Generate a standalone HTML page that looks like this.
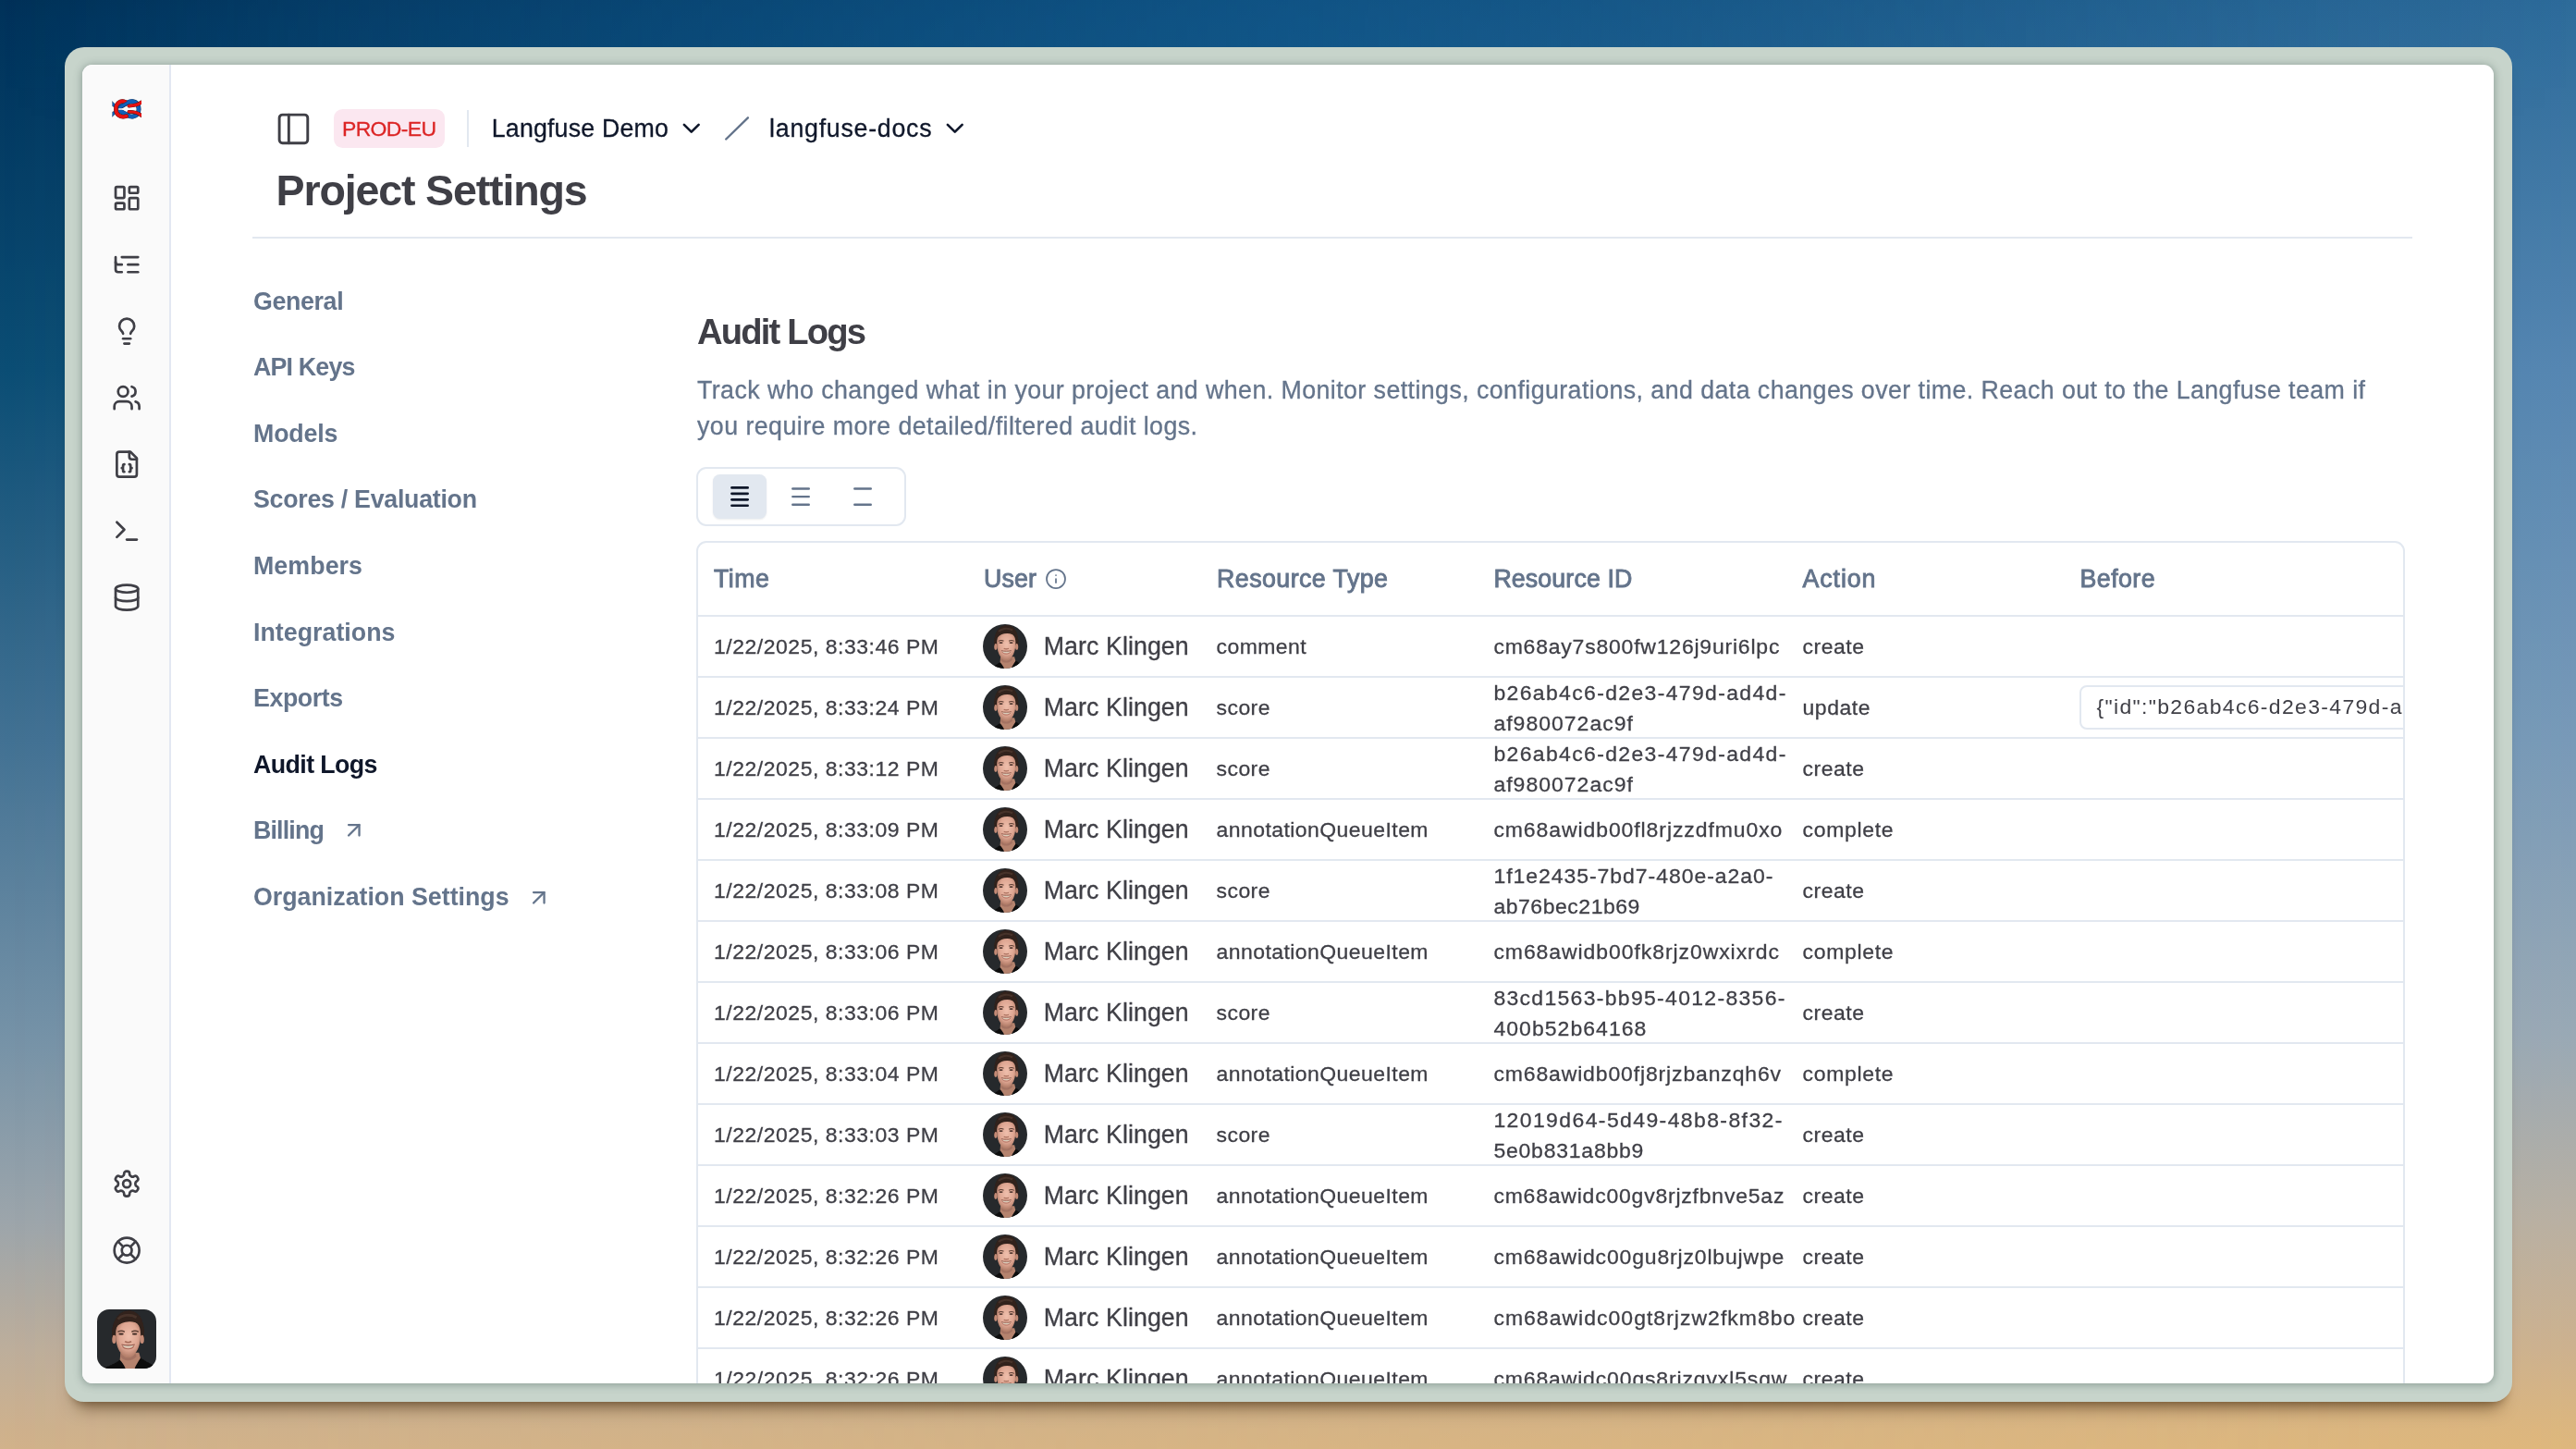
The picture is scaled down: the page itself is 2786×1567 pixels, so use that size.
<!DOCTYPE html>
<html lang="en"><head><meta charset="utf-8"><title>Project Settings - Audit Logs</title>
<style>
*{box-sizing:border-box;margin:0;padding:0}
html,body{width:2786px;height:1567px;overflow:hidden}
body{position:relative;font-family:"Liberation Sans",sans-serif;
 background:linear-gradient(180deg,rgb(0,49,88) 0%,rgb(0,51,91) 1.3%,rgb(11,77,116) 25.5%,rgb(66,113,147) 51%,rgb(117,146,167) 71.5%,rgb(156,165,171) 84.2%,rgb(189,174,155) 93.2%,rgb(206,177,141) 98.7%,rgb(209,178,139) 100%);}
body::before{content:"";position:absolute;left:0;top:0;width:2786px;height:1567px;
 background:linear-gradient(180deg,rgb(45,107,154) 0%,rgb(47,109,156) 1.3%,rgb(86,135,178) 25.5%,rgb(120,154,184) 51%,rgb(154,169,181) 71.5%,rgb(185,176,162) 84.2%,rgb(205,177,142) 93.2%,rgb(220,182,126) 98.7%,rgb(222,183,124) 100%);
 -webkit-mask-image:linear-gradient(90deg,rgba(0,0,0,0) 0%,rgba(0,0,0,1) 100%);mask-image:linear-gradient(90deg,rgba(0,0,0,0) 0%,rgba(0,0,0,1) 100%);}
body::after{content:"";position:absolute;left:0;top:0;width:2786px;height:140px;
 background:linear-gradient(90deg,rgba(0,96,160,0) 0%,rgba(0,96,160,.2) 25%,rgba(0,96,160,.3) 50%,rgba(0,96,160,.12) 75%,rgba(0,96,160,0) 100%);
 -webkit-mask-image:linear-gradient(180deg,#000 35%,rgba(0,0,0,0) 100%);mask-image:linear-gradient(180deg,#000 35%,rgba(0,0,0,0) 100%);}
.frame{position:absolute;z-index:1;left:70px;top:50.500px;width:2647px;height:1465.500px;border-radius:21px;background:#c7d4cb;
 box-shadow:0 19px 18px -13px rgba(70,40,10,.55),0 8px 9px -7px rgba(60,35,10,.35);}
.win{position:absolute;z-index:2;left:89px;top:70px;width:2608px;height:1425.500px;border-radius:11px;background:#fff;overflow:hidden;
 box-shadow:0 1px 8px 1px rgba(70,90,85,.42);}
.abs{position:absolute}
.page{position:absolute;left:-89px;top:-70px;width:2786px;height:1567px;will-change:transform}
.side{position:absolute;left:89px;top:70px;width:94px;height:1427px;background:#fafafa}
.sideb{position:absolute;left:183px;top:70px;width:2px;height:1427px;background:#e3e8f2}
.t{position:absolute;white-space:pre;line-height:1em;display:block}
.ic{position:absolute;display:block;overflow:hidden}
.hl{position:absolute;left:755px;width:1844px;height:2px;background:#e2e8f0}
</style></head>
<body>
<div class="frame"></div>
<div class="win"><div class="page">
<div class="side"></div><div class="sideb"></div>
<svg class="ic" style="left:120.700px;top:107.200px" viewBox="23 29 131 88" width="32.600" height="21.900" stroke-linecap="round" stroke-linejoin="round"><path d="M25 40 L37 52 L33.500 65 L25.500 60Z" fill="#1060b8" stroke="#1a2238" stroke-width="1.600"/><path d="M25 106 L37 94 L33.500 81 L25.500 86Z" fill="#1060b8" stroke="#1a2238" stroke-width="1.600"/><path d="M56 65 L92 44.500 C104 37 125 38 134 52 C142 66 141 84 133 95 C124 107 105 109 93 100.500 L57 81" stroke="#142a4a" stroke-width="20.1" fill="none"/><path d="M56 65 L92 44.500 C104 37 125 38 134 52 C142 66 141 84 133 95 C124 107 105 109 93 100.500 L57 81" stroke="#1060b8" stroke-width="17.5" fill="none"/><path d="M82 42.500 C58 32 40.500 50 40.500 73 C40.500 96 58 112.500 86 104" stroke="#3a1216" stroke-width="18.1" fill="none"/><path d="M82 42.500 C58 32 40.500 50 40.500 73 C40.500 96 58 112.500 86 104" stroke="#e61212" stroke-width="15.5" fill="none"/><path d="M58 65.500 L94 44.500" stroke="#142a4a" stroke-width="15.1" fill="none"/><path d="M58 65.500 L94 44.500" stroke="#1060b8" stroke-width="12.5" fill="none"/><path d="M94 44.500 C100 40 108 38.500 116 39.500" stroke="#1060b8" stroke-width="14" fill="none"/><path d="M151 43 C141 52.500 121 58 97 59.500" stroke="#3a1216" stroke-width="15.1" fill="none"/><path d="M151 43 C141 52.500 121 58 97 59.500" stroke="#e61212" stroke-width="12.5" fill="none"/><path d="M151 101 C141 90.500 121 85.500 97 84.500" stroke="#3a1216" stroke-width="15.1" fill="none"/><path d="M151 101 C141 90.500 121 85.500 97 84.500" stroke="#e61212" stroke-width="12.5" fill="none"/><path d="M54 73.200 L122 73.200" stroke="#fafafa" stroke-width="5.500" fill="none"/></svg>
<div class="abs" style="left:361px;top:118px;width:120px;height:42px;border-radius:9.500px;background:#fbe7f0"></div>
<div class="abs" style="left:505px;top:119px;width:2px;height:39.500px;background:#e2e8f0"></div>
<svg class="ic" style="left:780px;top:122px" width="34" height="34" viewBox="0 0 34 34"><path d="M5.200 28.500 L28.900 5.300" stroke="#64748b" stroke-width="2.400" stroke-linecap="round" fill="none"/></svg>
<div class="abs" style="left:273px;top:256px;width:2336px;height:2px;background:#e2e8f0"></div>
<div class="abs" style="left:753px;top:505px;width:227px;height:64px;border:2px solid #e2e8f0;border-radius:11px"></div>
<div class="abs" style="left:771px;top:513px;width:58px;height:48px;border-radius:7.500px;background:#e2e8f0;box-shadow:0 1px 2px rgba(15,23,42,.08)"></div>
<svg class="ic" style="left:780px;top:515px" width="180" height="44" viewBox="0 0 180 44" fill="none" stroke-linecap="round"><path d="M11.45 12.40 H28.65" stroke="#0f172a" stroke-width="2.7"/><path d="M11.45 18.85 H28.65" stroke="#0f172a" stroke-width="2.7"/><path d="M11.45 25.30 H28.65" stroke="#0f172a" stroke-width="2.7"/><path d="M11.45 31.75 H28.65" stroke="#0f172a" stroke-width="2.7"/><path d="M77.30 13.50 H94.80" stroke="#64748b" stroke-width="2.4"/><path d="M77.30 22.10 H94.80" stroke="#64748b" stroke-width="2.4"/><path d="M77.30 30.70 H94.80" stroke="#64748b" stroke-width="2.4"/><path d="M144.30 13.50 H161.80" stroke="#64748b" stroke-width="2.4"/><path d="M144.30 30.70 H161.80" stroke="#64748b" stroke-width="2.4"/></svg>
<div class="abs" style="left:753px;top:585px;width:1848px;height:940px;border:2px solid #e2e8f0;border-radius:11px"></div>
<div class="hl" style="top:665px"></div>
<div class="hl" style="top:731px"></div>
<div class="hl" style="top:797px"></div>
<div class="hl" style="top:863px"></div>
<div class="hl" style="top:929px"></div>
<div class="hl" style="top:995px"></div>
<div class="hl" style="top:1061px"></div>
<div class="hl" style="top:1127px"></div>
<div class="hl" style="top:1193px"></div>
<div class="hl" style="top:1259px"></div>
<div class="hl" style="top:1325px"></div>
<div class="hl" style="top:1391px"></div>
<div class="hl" style="top:1457px"></div>
<div class="abs" style="left:2249px;top:741px;width:350px;height:48px;overflow:hidden"><div class="abs" style="left:0;top:0;width:700px;height:48px;border:2px solid #e2e8f0;border-radius:8px"></div><span class="t" id="json" style="left:18.500px;top:12.0px;font-size:22.97px;color:#3f3f46;letter-spacing:1.338px">{&quot;id&quot;:&quot;b26ab4c6-d2e3-479d-ad4d-af980072ac9f&quot;,&quot;timestamp&quot;:&quot;2025-01-22T20:33:12.000Z&quot;</span></div>
<svg class="ic" style="left:1062.9px;top:674.8px;border-radius:50%" width="48.2" height="48.2" viewBox="0 0 48 48"><defs><radialGradient id="fg0" cx="52%" cy="42%" r="62%"><stop offset="0" stop-color="#efbfac"/><stop offset="0.6" stop-color="#dea692"/><stop offset="1" stop-color="#a8735f"/></radialGradient><filter id="fb0" x="-20%" y="-20%" width="140%" height="140%"><feGaussianBlur stdDeviation="0.5"/></filter></defs><rect width="48" height="48" fill="#26292c"/><g filter="url(#fb0)"><path d="M0 48 L8 46.500 C13 44.500 16 42.800 18.500 41 L35 39.200 C38 41 42 43.500 46.500 45.800 L48 48 Z" fill="#0d0d0e"/><path d="M19 35 L34 35 L35.200 39.500 C33 43 31 46 30.500 48 L23 48 C22 45 20 42.500 18.500 41 Z" fill="#b5836e"/><path d="M19.500 35.500 C22 40.500 28.500 40.500 31 35.500 L32 38 C28.500 42.500 22 42.500 19 38.500 Z" fill="#96655a" opacity="0.55"/><path d="M12.200 24.500 C11.300 10 17 1.200 25.500 1.200 C34 1.200 39.200 9 38 24.500 Z" fill="#30221c"/><ellipse cx="13.800" cy="24.300" rx="1.600" ry="3.400" fill="#c58b76"/><ellipse cx="36.500" cy="24.300" rx="1.600" ry="3.400" fill="#c58b76"/><path d="M15.100 20 C15 12 19 9.400 25.200 9.400 C31.500 9.400 35.400 12 35.300 20 C35.300 27 33.800 32 31 35.500 C29 38 27 38.900 25.200 38.900 C23.400 38.900 21.400 38 19.400 35.500 C16.600 32 15.100 27 15.100 20 Z" fill="url(#fg0)"/><path d="M12.200 23.500 C11.500 10 17 1.200 25.500 1.200 C34 1.200 39 9 38 23.500 C37.600 19 36.600 15 35 12.500 C33 10.600 30 9.800 26 9.900 C21.500 10 18.500 11.500 16.500 13.400 C14.600 15.500 13 19 12.200 23.500 Z" fill="#30221c"/><path d="M17 8 C20 4.500 27 3.500 32 6.500" stroke="#46332a" stroke-width="2.200" fill="none"/><path d="M16.800 18.300 C18.400 17.300 20.800 17.300 22.400 18.200 M28 18.200 C29.600 17.300 32 17.300 33.600 18.300" stroke="#5b3d32" stroke-width="1.100" fill="none"/><ellipse cx="19.500" cy="20" rx="2.100" ry="0.850" fill="#4a322b"/><ellipse cx="30.500" cy="20" rx="2.100" ry="0.850" fill="#4a322b"/><path d="M22.600 26 C23.800 27 26.600 27 27.800 26" stroke="#a56b59" stroke-width="1.100" fill="none"/><path d="M20.300 28.800 C22.800 29.500 27.600 29.500 30.100 28.800 C28.600 32 21.800 32 20.300 28.800 Z" fill="#d9cdbb"/><path d="M19.800 28.500 C22.800 29.300 27.600 29.300 30.600 28.500" stroke="#8f5648" stroke-width="0.900" fill="none"/><path d="M20.500 29.600 C22 32.800 28.400 32.800 29.900 29.600" stroke="#a8685a" stroke-width="0.800" fill="none"/></g></svg>
<svg class="ic" style="left:1062.9px;top:740.8px;border-radius:50%" width="48.2" height="48.2" viewBox="0 0 48 48"><defs><radialGradient id="fg1" cx="52%" cy="42%" r="62%"><stop offset="0" stop-color="#efbfac"/><stop offset="0.6" stop-color="#dea692"/><stop offset="1" stop-color="#a8735f"/></radialGradient><filter id="fb1" x="-20%" y="-20%" width="140%" height="140%"><feGaussianBlur stdDeviation="0.5"/></filter></defs><rect width="48" height="48" fill="#26292c"/><g filter="url(#fb1)"><path d="M0 48 L8 46.500 C13 44.500 16 42.800 18.500 41 L35 39.200 C38 41 42 43.500 46.500 45.800 L48 48 Z" fill="#0d0d0e"/><path d="M19 35 L34 35 L35.200 39.500 C33 43 31 46 30.500 48 L23 48 C22 45 20 42.500 18.500 41 Z" fill="#b5836e"/><path d="M19.500 35.500 C22 40.500 28.500 40.500 31 35.500 L32 38 C28.500 42.500 22 42.500 19 38.500 Z" fill="#96655a" opacity="0.55"/><path d="M12.200 24.500 C11.300 10 17 1.200 25.500 1.200 C34 1.200 39.200 9 38 24.500 Z" fill="#30221c"/><ellipse cx="13.800" cy="24.300" rx="1.600" ry="3.400" fill="#c58b76"/><ellipse cx="36.500" cy="24.300" rx="1.600" ry="3.400" fill="#c58b76"/><path d="M15.100 20 C15 12 19 9.400 25.200 9.400 C31.500 9.400 35.400 12 35.300 20 C35.300 27 33.800 32 31 35.500 C29 38 27 38.900 25.200 38.900 C23.400 38.900 21.400 38 19.400 35.500 C16.600 32 15.100 27 15.100 20 Z" fill="url(#fg1)"/><path d="M12.200 23.500 C11.500 10 17 1.200 25.500 1.200 C34 1.200 39 9 38 23.500 C37.600 19 36.600 15 35 12.500 C33 10.600 30 9.800 26 9.900 C21.500 10 18.500 11.500 16.500 13.400 C14.600 15.500 13 19 12.200 23.500 Z" fill="#30221c"/><path d="M17 8 C20 4.500 27 3.500 32 6.500" stroke="#46332a" stroke-width="2.200" fill="none"/><path d="M16.800 18.300 C18.400 17.300 20.800 17.300 22.400 18.200 M28 18.200 C29.600 17.300 32 17.300 33.600 18.300" stroke="#5b3d32" stroke-width="1.100" fill="none"/><ellipse cx="19.500" cy="20" rx="2.100" ry="0.850" fill="#4a322b"/><ellipse cx="30.500" cy="20" rx="2.100" ry="0.850" fill="#4a322b"/><path d="M22.600 26 C23.800 27 26.600 27 27.800 26" stroke="#a56b59" stroke-width="1.100" fill="none"/><path d="M20.300 28.800 C22.800 29.500 27.600 29.500 30.100 28.800 C28.600 32 21.800 32 20.300 28.800 Z" fill="#d9cdbb"/><path d="M19.800 28.500 C22.800 29.300 27.600 29.300 30.600 28.500" stroke="#8f5648" stroke-width="0.900" fill="none"/><path d="M20.500 29.600 C22 32.800 28.400 32.800 29.900 29.600" stroke="#a8685a" stroke-width="0.800" fill="none"/></g></svg>
<svg class="ic" style="left:1062.9px;top:806.8px;border-radius:50%" width="48.2" height="48.2" viewBox="0 0 48 48"><defs><radialGradient id="fg2" cx="52%" cy="42%" r="62%"><stop offset="0" stop-color="#efbfac"/><stop offset="0.6" stop-color="#dea692"/><stop offset="1" stop-color="#a8735f"/></radialGradient><filter id="fb2" x="-20%" y="-20%" width="140%" height="140%"><feGaussianBlur stdDeviation="0.5"/></filter></defs><rect width="48" height="48" fill="#26292c"/><g filter="url(#fb2)"><path d="M0 48 L8 46.500 C13 44.500 16 42.800 18.500 41 L35 39.200 C38 41 42 43.500 46.500 45.800 L48 48 Z" fill="#0d0d0e"/><path d="M19 35 L34 35 L35.200 39.500 C33 43 31 46 30.500 48 L23 48 C22 45 20 42.500 18.500 41 Z" fill="#b5836e"/><path d="M19.500 35.500 C22 40.500 28.500 40.500 31 35.500 L32 38 C28.500 42.500 22 42.500 19 38.500 Z" fill="#96655a" opacity="0.55"/><path d="M12.200 24.500 C11.300 10 17 1.200 25.500 1.200 C34 1.200 39.200 9 38 24.500 Z" fill="#30221c"/><ellipse cx="13.800" cy="24.300" rx="1.600" ry="3.400" fill="#c58b76"/><ellipse cx="36.500" cy="24.300" rx="1.600" ry="3.400" fill="#c58b76"/><path d="M15.100 20 C15 12 19 9.400 25.200 9.400 C31.500 9.400 35.400 12 35.300 20 C35.300 27 33.800 32 31 35.500 C29 38 27 38.900 25.200 38.900 C23.400 38.900 21.400 38 19.400 35.500 C16.600 32 15.100 27 15.100 20 Z" fill="url(#fg2)"/><path d="M12.200 23.500 C11.500 10 17 1.200 25.500 1.200 C34 1.200 39 9 38 23.500 C37.600 19 36.600 15 35 12.500 C33 10.600 30 9.800 26 9.900 C21.500 10 18.500 11.500 16.500 13.400 C14.600 15.500 13 19 12.200 23.500 Z" fill="#30221c"/><path d="M17 8 C20 4.500 27 3.500 32 6.500" stroke="#46332a" stroke-width="2.200" fill="none"/><path d="M16.800 18.300 C18.400 17.300 20.800 17.300 22.400 18.200 M28 18.200 C29.600 17.300 32 17.300 33.600 18.300" stroke="#5b3d32" stroke-width="1.100" fill="none"/><ellipse cx="19.500" cy="20" rx="2.100" ry="0.850" fill="#4a322b"/><ellipse cx="30.500" cy="20" rx="2.100" ry="0.850" fill="#4a322b"/><path d="M22.600 26 C23.800 27 26.600 27 27.800 26" stroke="#a56b59" stroke-width="1.100" fill="none"/><path d="M20.300 28.800 C22.800 29.500 27.600 29.500 30.100 28.800 C28.600 32 21.800 32 20.300 28.800 Z" fill="#d9cdbb"/><path d="M19.800 28.500 C22.800 29.300 27.600 29.300 30.600 28.500" stroke="#8f5648" stroke-width="0.900" fill="none"/><path d="M20.500 29.600 C22 32.800 28.400 32.800 29.900 29.600" stroke="#a8685a" stroke-width="0.800" fill="none"/></g></svg>
<svg class="ic" style="left:1062.9px;top:872.8px;border-radius:50%" width="48.2" height="48.2" viewBox="0 0 48 48"><defs><radialGradient id="fg3" cx="52%" cy="42%" r="62%"><stop offset="0" stop-color="#efbfac"/><stop offset="0.6" stop-color="#dea692"/><stop offset="1" stop-color="#a8735f"/></radialGradient><filter id="fb3" x="-20%" y="-20%" width="140%" height="140%"><feGaussianBlur stdDeviation="0.5"/></filter></defs><rect width="48" height="48" fill="#26292c"/><g filter="url(#fb3)"><path d="M0 48 L8 46.500 C13 44.500 16 42.800 18.500 41 L35 39.200 C38 41 42 43.500 46.500 45.800 L48 48 Z" fill="#0d0d0e"/><path d="M19 35 L34 35 L35.200 39.500 C33 43 31 46 30.500 48 L23 48 C22 45 20 42.500 18.500 41 Z" fill="#b5836e"/><path d="M19.500 35.500 C22 40.500 28.500 40.500 31 35.500 L32 38 C28.500 42.500 22 42.500 19 38.500 Z" fill="#96655a" opacity="0.55"/><path d="M12.200 24.500 C11.300 10 17 1.200 25.500 1.200 C34 1.200 39.200 9 38 24.500 Z" fill="#30221c"/><ellipse cx="13.800" cy="24.300" rx="1.600" ry="3.400" fill="#c58b76"/><ellipse cx="36.500" cy="24.300" rx="1.600" ry="3.400" fill="#c58b76"/><path d="M15.100 20 C15 12 19 9.400 25.200 9.400 C31.500 9.400 35.400 12 35.300 20 C35.300 27 33.800 32 31 35.500 C29 38 27 38.900 25.200 38.900 C23.400 38.900 21.400 38 19.400 35.500 C16.600 32 15.100 27 15.100 20 Z" fill="url(#fg3)"/><path d="M12.200 23.500 C11.500 10 17 1.200 25.500 1.200 C34 1.200 39 9 38 23.500 C37.600 19 36.600 15 35 12.500 C33 10.600 30 9.800 26 9.900 C21.500 10 18.500 11.500 16.500 13.400 C14.600 15.500 13 19 12.200 23.500 Z" fill="#30221c"/><path d="M17 8 C20 4.500 27 3.500 32 6.500" stroke="#46332a" stroke-width="2.200" fill="none"/><path d="M16.800 18.300 C18.400 17.300 20.800 17.300 22.400 18.200 M28 18.200 C29.600 17.300 32 17.300 33.600 18.300" stroke="#5b3d32" stroke-width="1.100" fill="none"/><ellipse cx="19.500" cy="20" rx="2.100" ry="0.850" fill="#4a322b"/><ellipse cx="30.500" cy="20" rx="2.100" ry="0.850" fill="#4a322b"/><path d="M22.600 26 C23.800 27 26.600 27 27.800 26" stroke="#a56b59" stroke-width="1.100" fill="none"/><path d="M20.300 28.800 C22.800 29.500 27.600 29.500 30.100 28.800 C28.600 32 21.800 32 20.300 28.800 Z" fill="#d9cdbb"/><path d="M19.800 28.500 C22.800 29.300 27.600 29.300 30.600 28.500" stroke="#8f5648" stroke-width="0.900" fill="none"/><path d="M20.500 29.600 C22 32.800 28.400 32.800 29.900 29.600" stroke="#a8685a" stroke-width="0.800" fill="none"/></g></svg>
<svg class="ic" style="left:1062.9px;top:938.8px;border-radius:50%" width="48.2" height="48.2" viewBox="0 0 48 48"><defs><radialGradient id="fg4" cx="52%" cy="42%" r="62%"><stop offset="0" stop-color="#efbfac"/><stop offset="0.6" stop-color="#dea692"/><stop offset="1" stop-color="#a8735f"/></radialGradient><filter id="fb4" x="-20%" y="-20%" width="140%" height="140%"><feGaussianBlur stdDeviation="0.5"/></filter></defs><rect width="48" height="48" fill="#26292c"/><g filter="url(#fb4)"><path d="M0 48 L8 46.500 C13 44.500 16 42.800 18.500 41 L35 39.200 C38 41 42 43.500 46.500 45.800 L48 48 Z" fill="#0d0d0e"/><path d="M19 35 L34 35 L35.200 39.500 C33 43 31 46 30.500 48 L23 48 C22 45 20 42.500 18.500 41 Z" fill="#b5836e"/><path d="M19.500 35.500 C22 40.500 28.500 40.500 31 35.500 L32 38 C28.500 42.500 22 42.500 19 38.500 Z" fill="#96655a" opacity="0.55"/><path d="M12.200 24.500 C11.300 10 17 1.200 25.500 1.200 C34 1.200 39.200 9 38 24.500 Z" fill="#30221c"/><ellipse cx="13.800" cy="24.300" rx="1.600" ry="3.400" fill="#c58b76"/><ellipse cx="36.500" cy="24.300" rx="1.600" ry="3.400" fill="#c58b76"/><path d="M15.100 20 C15 12 19 9.400 25.200 9.400 C31.500 9.400 35.400 12 35.300 20 C35.300 27 33.800 32 31 35.500 C29 38 27 38.900 25.200 38.900 C23.400 38.900 21.400 38 19.400 35.500 C16.600 32 15.100 27 15.100 20 Z" fill="url(#fg4)"/><path d="M12.200 23.500 C11.500 10 17 1.200 25.500 1.200 C34 1.200 39 9 38 23.500 C37.600 19 36.600 15 35 12.500 C33 10.600 30 9.800 26 9.900 C21.500 10 18.500 11.500 16.500 13.400 C14.600 15.500 13 19 12.200 23.500 Z" fill="#30221c"/><path d="M17 8 C20 4.500 27 3.500 32 6.500" stroke="#46332a" stroke-width="2.200" fill="none"/><path d="M16.800 18.300 C18.400 17.300 20.800 17.300 22.400 18.200 M28 18.200 C29.600 17.300 32 17.300 33.600 18.300" stroke="#5b3d32" stroke-width="1.100" fill="none"/><ellipse cx="19.500" cy="20" rx="2.100" ry="0.850" fill="#4a322b"/><ellipse cx="30.500" cy="20" rx="2.100" ry="0.850" fill="#4a322b"/><path d="M22.600 26 C23.800 27 26.600 27 27.800 26" stroke="#a56b59" stroke-width="1.100" fill="none"/><path d="M20.300 28.800 C22.800 29.500 27.600 29.500 30.100 28.800 C28.600 32 21.800 32 20.300 28.800 Z" fill="#d9cdbb"/><path d="M19.800 28.500 C22.800 29.300 27.600 29.300 30.600 28.500" stroke="#8f5648" stroke-width="0.900" fill="none"/><path d="M20.500 29.600 C22 32.800 28.400 32.800 29.900 29.600" stroke="#a8685a" stroke-width="0.800" fill="none"/></g></svg>
<svg class="ic" style="left:1062.9px;top:1004.8px;border-radius:50%" width="48.2" height="48.2" viewBox="0 0 48 48"><defs><radialGradient id="fg5" cx="52%" cy="42%" r="62%"><stop offset="0" stop-color="#efbfac"/><stop offset="0.6" stop-color="#dea692"/><stop offset="1" stop-color="#a8735f"/></radialGradient><filter id="fb5" x="-20%" y="-20%" width="140%" height="140%"><feGaussianBlur stdDeviation="0.5"/></filter></defs><rect width="48" height="48" fill="#26292c"/><g filter="url(#fb5)"><path d="M0 48 L8 46.500 C13 44.500 16 42.800 18.500 41 L35 39.200 C38 41 42 43.500 46.500 45.800 L48 48 Z" fill="#0d0d0e"/><path d="M19 35 L34 35 L35.200 39.500 C33 43 31 46 30.500 48 L23 48 C22 45 20 42.500 18.500 41 Z" fill="#b5836e"/><path d="M19.500 35.500 C22 40.500 28.500 40.500 31 35.500 L32 38 C28.500 42.500 22 42.500 19 38.500 Z" fill="#96655a" opacity="0.55"/><path d="M12.200 24.500 C11.300 10 17 1.200 25.500 1.200 C34 1.200 39.200 9 38 24.500 Z" fill="#30221c"/><ellipse cx="13.800" cy="24.300" rx="1.600" ry="3.400" fill="#c58b76"/><ellipse cx="36.500" cy="24.300" rx="1.600" ry="3.400" fill="#c58b76"/><path d="M15.100 20 C15 12 19 9.400 25.200 9.400 C31.500 9.400 35.400 12 35.300 20 C35.300 27 33.800 32 31 35.500 C29 38 27 38.900 25.200 38.900 C23.400 38.900 21.400 38 19.400 35.500 C16.600 32 15.100 27 15.100 20 Z" fill="url(#fg5)"/><path d="M12.200 23.500 C11.500 10 17 1.200 25.500 1.200 C34 1.200 39 9 38 23.500 C37.600 19 36.600 15 35 12.500 C33 10.600 30 9.800 26 9.900 C21.500 10 18.500 11.500 16.500 13.400 C14.600 15.500 13 19 12.200 23.500 Z" fill="#30221c"/><path d="M17 8 C20 4.500 27 3.500 32 6.500" stroke="#46332a" stroke-width="2.200" fill="none"/><path d="M16.800 18.300 C18.400 17.300 20.800 17.300 22.400 18.200 M28 18.200 C29.600 17.300 32 17.300 33.600 18.300" stroke="#5b3d32" stroke-width="1.100" fill="none"/><ellipse cx="19.500" cy="20" rx="2.100" ry="0.850" fill="#4a322b"/><ellipse cx="30.500" cy="20" rx="2.100" ry="0.850" fill="#4a322b"/><path d="M22.600 26 C23.800 27 26.600 27 27.800 26" stroke="#a56b59" stroke-width="1.100" fill="none"/><path d="M20.300 28.800 C22.800 29.500 27.600 29.500 30.100 28.800 C28.600 32 21.800 32 20.300 28.800 Z" fill="#d9cdbb"/><path d="M19.800 28.500 C22.800 29.300 27.600 29.300 30.600 28.500" stroke="#8f5648" stroke-width="0.900" fill="none"/><path d="M20.500 29.600 C22 32.800 28.400 32.800 29.900 29.600" stroke="#a8685a" stroke-width="0.800" fill="none"/></g></svg>
<svg class="ic" style="left:1062.9px;top:1070.8px;border-radius:50%" width="48.2" height="48.2" viewBox="0 0 48 48"><defs><radialGradient id="fg6" cx="52%" cy="42%" r="62%"><stop offset="0" stop-color="#efbfac"/><stop offset="0.6" stop-color="#dea692"/><stop offset="1" stop-color="#a8735f"/></radialGradient><filter id="fb6" x="-20%" y="-20%" width="140%" height="140%"><feGaussianBlur stdDeviation="0.5"/></filter></defs><rect width="48" height="48" fill="#26292c"/><g filter="url(#fb6)"><path d="M0 48 L8 46.500 C13 44.500 16 42.800 18.500 41 L35 39.200 C38 41 42 43.500 46.500 45.800 L48 48 Z" fill="#0d0d0e"/><path d="M19 35 L34 35 L35.200 39.500 C33 43 31 46 30.500 48 L23 48 C22 45 20 42.500 18.500 41 Z" fill="#b5836e"/><path d="M19.500 35.500 C22 40.500 28.500 40.500 31 35.500 L32 38 C28.500 42.500 22 42.500 19 38.500 Z" fill="#96655a" opacity="0.55"/><path d="M12.200 24.500 C11.300 10 17 1.200 25.500 1.200 C34 1.200 39.200 9 38 24.500 Z" fill="#30221c"/><ellipse cx="13.800" cy="24.300" rx="1.600" ry="3.400" fill="#c58b76"/><ellipse cx="36.500" cy="24.300" rx="1.600" ry="3.400" fill="#c58b76"/><path d="M15.100 20 C15 12 19 9.400 25.200 9.400 C31.500 9.400 35.400 12 35.300 20 C35.300 27 33.800 32 31 35.500 C29 38 27 38.900 25.200 38.900 C23.400 38.900 21.400 38 19.400 35.500 C16.600 32 15.100 27 15.100 20 Z" fill="url(#fg6)"/><path d="M12.200 23.500 C11.500 10 17 1.200 25.500 1.200 C34 1.200 39 9 38 23.500 C37.600 19 36.600 15 35 12.500 C33 10.600 30 9.800 26 9.900 C21.500 10 18.500 11.500 16.500 13.400 C14.600 15.500 13 19 12.200 23.500 Z" fill="#30221c"/><path d="M17 8 C20 4.500 27 3.500 32 6.500" stroke="#46332a" stroke-width="2.200" fill="none"/><path d="M16.800 18.300 C18.400 17.300 20.800 17.300 22.400 18.200 M28 18.200 C29.600 17.300 32 17.300 33.600 18.300" stroke="#5b3d32" stroke-width="1.100" fill="none"/><ellipse cx="19.500" cy="20" rx="2.100" ry="0.850" fill="#4a322b"/><ellipse cx="30.500" cy="20" rx="2.100" ry="0.850" fill="#4a322b"/><path d="M22.600 26 C23.800 27 26.600 27 27.800 26" stroke="#a56b59" stroke-width="1.100" fill="none"/><path d="M20.300 28.800 C22.800 29.500 27.600 29.500 30.100 28.800 C28.600 32 21.800 32 20.300 28.800 Z" fill="#d9cdbb"/><path d="M19.800 28.500 C22.800 29.300 27.600 29.300 30.600 28.500" stroke="#8f5648" stroke-width="0.900" fill="none"/><path d="M20.500 29.600 C22 32.800 28.400 32.800 29.900 29.600" stroke="#a8685a" stroke-width="0.800" fill="none"/></g></svg>
<svg class="ic" style="left:1062.9px;top:1136.8px;border-radius:50%" width="48.2" height="48.2" viewBox="0 0 48 48"><defs><radialGradient id="fg7" cx="52%" cy="42%" r="62%"><stop offset="0" stop-color="#efbfac"/><stop offset="0.6" stop-color="#dea692"/><stop offset="1" stop-color="#a8735f"/></radialGradient><filter id="fb7" x="-20%" y="-20%" width="140%" height="140%"><feGaussianBlur stdDeviation="0.5"/></filter></defs><rect width="48" height="48" fill="#26292c"/><g filter="url(#fb7)"><path d="M0 48 L8 46.500 C13 44.500 16 42.800 18.500 41 L35 39.200 C38 41 42 43.500 46.500 45.800 L48 48 Z" fill="#0d0d0e"/><path d="M19 35 L34 35 L35.200 39.500 C33 43 31 46 30.500 48 L23 48 C22 45 20 42.500 18.500 41 Z" fill="#b5836e"/><path d="M19.500 35.500 C22 40.500 28.500 40.500 31 35.500 L32 38 C28.500 42.500 22 42.500 19 38.500 Z" fill="#96655a" opacity="0.55"/><path d="M12.200 24.500 C11.300 10 17 1.200 25.500 1.200 C34 1.200 39.200 9 38 24.500 Z" fill="#30221c"/><ellipse cx="13.800" cy="24.300" rx="1.600" ry="3.400" fill="#c58b76"/><ellipse cx="36.500" cy="24.300" rx="1.600" ry="3.400" fill="#c58b76"/><path d="M15.100 20 C15 12 19 9.400 25.200 9.400 C31.500 9.400 35.400 12 35.300 20 C35.300 27 33.800 32 31 35.500 C29 38 27 38.900 25.200 38.900 C23.400 38.900 21.400 38 19.400 35.500 C16.600 32 15.100 27 15.100 20 Z" fill="url(#fg7)"/><path d="M12.200 23.500 C11.500 10 17 1.200 25.500 1.200 C34 1.200 39 9 38 23.500 C37.600 19 36.600 15 35 12.500 C33 10.600 30 9.800 26 9.900 C21.500 10 18.500 11.500 16.500 13.400 C14.600 15.500 13 19 12.200 23.500 Z" fill="#30221c"/><path d="M17 8 C20 4.500 27 3.500 32 6.500" stroke="#46332a" stroke-width="2.200" fill="none"/><path d="M16.800 18.300 C18.400 17.300 20.800 17.300 22.400 18.200 M28 18.200 C29.600 17.300 32 17.300 33.600 18.300" stroke="#5b3d32" stroke-width="1.100" fill="none"/><ellipse cx="19.500" cy="20" rx="2.100" ry="0.850" fill="#4a322b"/><ellipse cx="30.500" cy="20" rx="2.100" ry="0.850" fill="#4a322b"/><path d="M22.600 26 C23.800 27 26.600 27 27.800 26" stroke="#a56b59" stroke-width="1.100" fill="none"/><path d="M20.300 28.800 C22.800 29.500 27.600 29.500 30.100 28.800 C28.600 32 21.800 32 20.300 28.800 Z" fill="#d9cdbb"/><path d="M19.800 28.500 C22.800 29.300 27.600 29.300 30.600 28.500" stroke="#8f5648" stroke-width="0.900" fill="none"/><path d="M20.500 29.600 C22 32.800 28.400 32.800 29.900 29.600" stroke="#a8685a" stroke-width="0.800" fill="none"/></g></svg>
<svg class="ic" style="left:1062.9px;top:1202.8px;border-radius:50%" width="48.2" height="48.2" viewBox="0 0 48 48"><defs><radialGradient id="fg8" cx="52%" cy="42%" r="62%"><stop offset="0" stop-color="#efbfac"/><stop offset="0.6" stop-color="#dea692"/><stop offset="1" stop-color="#a8735f"/></radialGradient><filter id="fb8" x="-20%" y="-20%" width="140%" height="140%"><feGaussianBlur stdDeviation="0.5"/></filter></defs><rect width="48" height="48" fill="#26292c"/><g filter="url(#fb8)"><path d="M0 48 L8 46.500 C13 44.500 16 42.800 18.500 41 L35 39.200 C38 41 42 43.500 46.500 45.800 L48 48 Z" fill="#0d0d0e"/><path d="M19 35 L34 35 L35.200 39.500 C33 43 31 46 30.500 48 L23 48 C22 45 20 42.500 18.500 41 Z" fill="#b5836e"/><path d="M19.500 35.500 C22 40.500 28.500 40.500 31 35.500 L32 38 C28.500 42.500 22 42.500 19 38.500 Z" fill="#96655a" opacity="0.55"/><path d="M12.200 24.500 C11.300 10 17 1.200 25.500 1.200 C34 1.200 39.200 9 38 24.500 Z" fill="#30221c"/><ellipse cx="13.800" cy="24.300" rx="1.600" ry="3.400" fill="#c58b76"/><ellipse cx="36.500" cy="24.300" rx="1.600" ry="3.400" fill="#c58b76"/><path d="M15.100 20 C15 12 19 9.400 25.200 9.400 C31.500 9.400 35.400 12 35.300 20 C35.300 27 33.800 32 31 35.500 C29 38 27 38.900 25.200 38.900 C23.400 38.900 21.400 38 19.400 35.500 C16.600 32 15.100 27 15.100 20 Z" fill="url(#fg8)"/><path d="M12.200 23.500 C11.500 10 17 1.200 25.500 1.200 C34 1.200 39 9 38 23.500 C37.600 19 36.600 15 35 12.500 C33 10.600 30 9.800 26 9.900 C21.500 10 18.500 11.500 16.500 13.400 C14.600 15.500 13 19 12.200 23.500 Z" fill="#30221c"/><path d="M17 8 C20 4.500 27 3.500 32 6.500" stroke="#46332a" stroke-width="2.200" fill="none"/><path d="M16.800 18.300 C18.400 17.300 20.800 17.300 22.400 18.200 M28 18.200 C29.600 17.300 32 17.300 33.600 18.300" stroke="#5b3d32" stroke-width="1.100" fill="none"/><ellipse cx="19.500" cy="20" rx="2.100" ry="0.850" fill="#4a322b"/><ellipse cx="30.500" cy="20" rx="2.100" ry="0.850" fill="#4a322b"/><path d="M22.600 26 C23.800 27 26.600 27 27.800 26" stroke="#a56b59" stroke-width="1.100" fill="none"/><path d="M20.300 28.800 C22.800 29.500 27.600 29.500 30.100 28.800 C28.600 32 21.800 32 20.300 28.800 Z" fill="#d9cdbb"/><path d="M19.800 28.500 C22.800 29.300 27.600 29.300 30.600 28.500" stroke="#8f5648" stroke-width="0.900" fill="none"/><path d="M20.500 29.600 C22 32.800 28.400 32.800 29.900 29.600" stroke="#a8685a" stroke-width="0.800" fill="none"/></g></svg>
<svg class="ic" style="left:1062.9px;top:1268.8px;border-radius:50%" width="48.2" height="48.2" viewBox="0 0 48 48"><defs><radialGradient id="fg9" cx="52%" cy="42%" r="62%"><stop offset="0" stop-color="#efbfac"/><stop offset="0.6" stop-color="#dea692"/><stop offset="1" stop-color="#a8735f"/></radialGradient><filter id="fb9" x="-20%" y="-20%" width="140%" height="140%"><feGaussianBlur stdDeviation="0.5"/></filter></defs><rect width="48" height="48" fill="#26292c"/><g filter="url(#fb9)"><path d="M0 48 L8 46.500 C13 44.500 16 42.800 18.500 41 L35 39.200 C38 41 42 43.500 46.500 45.800 L48 48 Z" fill="#0d0d0e"/><path d="M19 35 L34 35 L35.200 39.500 C33 43 31 46 30.500 48 L23 48 C22 45 20 42.500 18.500 41 Z" fill="#b5836e"/><path d="M19.500 35.500 C22 40.500 28.500 40.500 31 35.500 L32 38 C28.500 42.500 22 42.500 19 38.500 Z" fill="#96655a" opacity="0.55"/><path d="M12.200 24.500 C11.300 10 17 1.200 25.500 1.200 C34 1.200 39.200 9 38 24.500 Z" fill="#30221c"/><ellipse cx="13.800" cy="24.300" rx="1.600" ry="3.400" fill="#c58b76"/><ellipse cx="36.500" cy="24.300" rx="1.600" ry="3.400" fill="#c58b76"/><path d="M15.100 20 C15 12 19 9.400 25.200 9.400 C31.500 9.400 35.400 12 35.300 20 C35.300 27 33.800 32 31 35.500 C29 38 27 38.900 25.200 38.900 C23.400 38.900 21.400 38 19.400 35.500 C16.600 32 15.100 27 15.100 20 Z" fill="url(#fg9)"/><path d="M12.200 23.500 C11.500 10 17 1.200 25.500 1.200 C34 1.200 39 9 38 23.500 C37.600 19 36.600 15 35 12.500 C33 10.600 30 9.800 26 9.900 C21.500 10 18.500 11.500 16.500 13.400 C14.600 15.500 13 19 12.200 23.500 Z" fill="#30221c"/><path d="M17 8 C20 4.500 27 3.500 32 6.500" stroke="#46332a" stroke-width="2.200" fill="none"/><path d="M16.800 18.300 C18.400 17.300 20.800 17.300 22.400 18.200 M28 18.200 C29.600 17.300 32 17.300 33.600 18.300" stroke="#5b3d32" stroke-width="1.100" fill="none"/><ellipse cx="19.500" cy="20" rx="2.100" ry="0.850" fill="#4a322b"/><ellipse cx="30.500" cy="20" rx="2.100" ry="0.850" fill="#4a322b"/><path d="M22.600 26 C23.800 27 26.600 27 27.800 26" stroke="#a56b59" stroke-width="1.100" fill="none"/><path d="M20.300 28.800 C22.800 29.500 27.600 29.500 30.100 28.800 C28.600 32 21.800 32 20.300 28.800 Z" fill="#d9cdbb"/><path d="M19.800 28.500 C22.800 29.300 27.600 29.300 30.600 28.500" stroke="#8f5648" stroke-width="0.900" fill="none"/><path d="M20.500 29.600 C22 32.800 28.400 32.800 29.900 29.600" stroke="#a8685a" stroke-width="0.800" fill="none"/></g></svg>
<svg class="ic" style="left:1062.9px;top:1334.8px;border-radius:50%" width="48.2" height="48.2" viewBox="0 0 48 48"><defs><radialGradient id="fg10" cx="52%" cy="42%" r="62%"><stop offset="0" stop-color="#efbfac"/><stop offset="0.6" stop-color="#dea692"/><stop offset="1" stop-color="#a8735f"/></radialGradient><filter id="fb10" x="-20%" y="-20%" width="140%" height="140%"><feGaussianBlur stdDeviation="0.5"/></filter></defs><rect width="48" height="48" fill="#26292c"/><g filter="url(#fb10)"><path d="M0 48 L8 46.500 C13 44.500 16 42.800 18.500 41 L35 39.200 C38 41 42 43.500 46.500 45.800 L48 48 Z" fill="#0d0d0e"/><path d="M19 35 L34 35 L35.200 39.500 C33 43 31 46 30.500 48 L23 48 C22 45 20 42.500 18.500 41 Z" fill="#b5836e"/><path d="M19.500 35.500 C22 40.500 28.500 40.500 31 35.500 L32 38 C28.500 42.500 22 42.500 19 38.500 Z" fill="#96655a" opacity="0.55"/><path d="M12.200 24.500 C11.300 10 17 1.200 25.500 1.200 C34 1.200 39.200 9 38 24.500 Z" fill="#30221c"/><ellipse cx="13.800" cy="24.300" rx="1.600" ry="3.400" fill="#c58b76"/><ellipse cx="36.500" cy="24.300" rx="1.600" ry="3.400" fill="#c58b76"/><path d="M15.100 20 C15 12 19 9.400 25.200 9.400 C31.500 9.400 35.400 12 35.300 20 C35.300 27 33.800 32 31 35.500 C29 38 27 38.900 25.200 38.900 C23.400 38.900 21.400 38 19.400 35.500 C16.600 32 15.100 27 15.100 20 Z" fill="url(#fg10)"/><path d="M12.200 23.500 C11.500 10 17 1.200 25.500 1.200 C34 1.200 39 9 38 23.500 C37.600 19 36.600 15 35 12.500 C33 10.600 30 9.800 26 9.900 C21.500 10 18.500 11.500 16.500 13.400 C14.600 15.500 13 19 12.200 23.500 Z" fill="#30221c"/><path d="M17 8 C20 4.500 27 3.500 32 6.500" stroke="#46332a" stroke-width="2.200" fill="none"/><path d="M16.800 18.300 C18.400 17.300 20.800 17.300 22.400 18.200 M28 18.200 C29.600 17.300 32 17.300 33.600 18.300" stroke="#5b3d32" stroke-width="1.100" fill="none"/><ellipse cx="19.500" cy="20" rx="2.100" ry="0.850" fill="#4a322b"/><ellipse cx="30.500" cy="20" rx="2.100" ry="0.850" fill="#4a322b"/><path d="M22.600 26 C23.800 27 26.600 27 27.800 26" stroke="#a56b59" stroke-width="1.100" fill="none"/><path d="M20.300 28.800 C22.800 29.500 27.600 29.500 30.100 28.800 C28.600 32 21.800 32 20.300 28.800 Z" fill="#d9cdbb"/><path d="M19.800 28.500 C22.800 29.300 27.600 29.300 30.600 28.500" stroke="#8f5648" stroke-width="0.900" fill="none"/><path d="M20.500 29.600 C22 32.800 28.400 32.800 29.900 29.600" stroke="#a8685a" stroke-width="0.800" fill="none"/></g></svg>
<svg class="ic" style="left:1062.9px;top:1400.8px;border-radius:50%" width="48.2" height="48.2" viewBox="0 0 48 48"><defs><radialGradient id="fg11" cx="52%" cy="42%" r="62%"><stop offset="0" stop-color="#efbfac"/><stop offset="0.6" stop-color="#dea692"/><stop offset="1" stop-color="#a8735f"/></radialGradient><filter id="fb11" x="-20%" y="-20%" width="140%" height="140%"><feGaussianBlur stdDeviation="0.5"/></filter></defs><rect width="48" height="48" fill="#26292c"/><g filter="url(#fb11)"><path d="M0 48 L8 46.500 C13 44.500 16 42.800 18.500 41 L35 39.200 C38 41 42 43.500 46.500 45.800 L48 48 Z" fill="#0d0d0e"/><path d="M19 35 L34 35 L35.200 39.500 C33 43 31 46 30.500 48 L23 48 C22 45 20 42.500 18.500 41 Z" fill="#b5836e"/><path d="M19.500 35.500 C22 40.500 28.500 40.500 31 35.500 L32 38 C28.500 42.500 22 42.500 19 38.500 Z" fill="#96655a" opacity="0.55"/><path d="M12.200 24.500 C11.300 10 17 1.200 25.500 1.200 C34 1.200 39.200 9 38 24.500 Z" fill="#30221c"/><ellipse cx="13.800" cy="24.300" rx="1.600" ry="3.400" fill="#c58b76"/><ellipse cx="36.500" cy="24.300" rx="1.600" ry="3.400" fill="#c58b76"/><path d="M15.100 20 C15 12 19 9.400 25.200 9.400 C31.500 9.400 35.400 12 35.300 20 C35.300 27 33.800 32 31 35.500 C29 38 27 38.900 25.200 38.900 C23.400 38.900 21.400 38 19.400 35.500 C16.600 32 15.100 27 15.100 20 Z" fill="url(#fg11)"/><path d="M12.200 23.500 C11.500 10 17 1.200 25.500 1.200 C34 1.200 39 9 38 23.500 C37.600 19 36.600 15 35 12.500 C33 10.600 30 9.800 26 9.900 C21.500 10 18.500 11.500 16.500 13.400 C14.600 15.500 13 19 12.200 23.500 Z" fill="#30221c"/><path d="M17 8 C20 4.500 27 3.500 32 6.500" stroke="#46332a" stroke-width="2.200" fill="none"/><path d="M16.800 18.300 C18.400 17.300 20.800 17.300 22.400 18.200 M28 18.200 C29.600 17.300 32 17.300 33.600 18.300" stroke="#5b3d32" stroke-width="1.100" fill="none"/><ellipse cx="19.500" cy="20" rx="2.100" ry="0.850" fill="#4a322b"/><ellipse cx="30.500" cy="20" rx="2.100" ry="0.850" fill="#4a322b"/><path d="M22.600 26 C23.800 27 26.600 27 27.800 26" stroke="#a56b59" stroke-width="1.100" fill="none"/><path d="M20.300 28.800 C22.800 29.500 27.600 29.500 30.100 28.800 C28.600 32 21.800 32 20.300 28.800 Z" fill="#d9cdbb"/><path d="M19.800 28.500 C22.800 29.300 27.600 29.300 30.600 28.500" stroke="#8f5648" stroke-width="0.900" fill="none"/><path d="M20.500 29.600 C22 32.800 28.400 32.800 29.900 29.600" stroke="#a8685a" stroke-width="0.800" fill="none"/></g></svg>
<svg class="ic" style="left:1062.9px;top:1466.8px;border-radius:50%" width="48.2" height="48.2" viewBox="0 0 48 48"><defs><radialGradient id="fg12" cx="52%" cy="42%" r="62%"><stop offset="0" stop-color="#efbfac"/><stop offset="0.6" stop-color="#dea692"/><stop offset="1" stop-color="#a8735f"/></radialGradient><filter id="fb12" x="-20%" y="-20%" width="140%" height="140%"><feGaussianBlur stdDeviation="0.5"/></filter></defs><rect width="48" height="48" fill="#26292c"/><g filter="url(#fb12)"><path d="M0 48 L8 46.500 C13 44.500 16 42.800 18.500 41 L35 39.200 C38 41 42 43.500 46.500 45.800 L48 48 Z" fill="#0d0d0e"/><path d="M19 35 L34 35 L35.200 39.500 C33 43 31 46 30.500 48 L23 48 C22 45 20 42.500 18.500 41 Z" fill="#b5836e"/><path d="M19.500 35.500 C22 40.500 28.500 40.500 31 35.500 L32 38 C28.500 42.500 22 42.500 19 38.500 Z" fill="#96655a" opacity="0.55"/><path d="M12.200 24.500 C11.300 10 17 1.200 25.500 1.200 C34 1.200 39.200 9 38 24.500 Z" fill="#30221c"/><ellipse cx="13.800" cy="24.300" rx="1.600" ry="3.400" fill="#c58b76"/><ellipse cx="36.500" cy="24.300" rx="1.600" ry="3.400" fill="#c58b76"/><path d="M15.100 20 C15 12 19 9.400 25.200 9.400 C31.500 9.400 35.400 12 35.300 20 C35.300 27 33.800 32 31 35.500 C29 38 27 38.900 25.200 38.900 C23.400 38.900 21.400 38 19.400 35.500 C16.600 32 15.100 27 15.100 20 Z" fill="url(#fg12)"/><path d="M12.200 23.500 C11.500 10 17 1.200 25.500 1.200 C34 1.200 39 9 38 23.500 C37.600 19 36.600 15 35 12.500 C33 10.600 30 9.800 26 9.900 C21.500 10 18.500 11.500 16.500 13.400 C14.600 15.500 13 19 12.200 23.500 Z" fill="#30221c"/><path d="M17 8 C20 4.500 27 3.500 32 6.500" stroke="#46332a" stroke-width="2.200" fill="none"/><path d="M16.800 18.300 C18.400 17.300 20.800 17.300 22.400 18.200 M28 18.200 C29.600 17.300 32 17.300 33.600 18.300" stroke="#5b3d32" stroke-width="1.100" fill="none"/><ellipse cx="19.500" cy="20" rx="2.100" ry="0.850" fill="#4a322b"/><ellipse cx="30.500" cy="20" rx="2.100" ry="0.850" fill="#4a322b"/><path d="M22.600 26 C23.800 27 26.600 27 27.800 26" stroke="#a56b59" stroke-width="1.100" fill="none"/><path d="M20.300 28.800 C22.800 29.500 27.600 29.500 30.100 28.800 C28.600 32 21.800 32 20.300 28.800 Z" fill="#d9cdbb"/><path d="M19.800 28.500 C22.800 29.300 27.600 29.300 30.600 28.500" stroke="#8f5648" stroke-width="0.900" fill="none"/><path d="M20.500 29.600 C22 32.800 28.400 32.800 29.900 29.600" stroke="#a8685a" stroke-width="0.800" fill="none"/></g></svg>
<svg class="ic" style="left:120.8px;top:197.8px" width="32.3" height="32.3" viewBox="0 0 24 24" fill="none" stroke="#3f3f46" stroke-width="2" stroke-linecap="round" stroke-linejoin="round"><rect width="7" height="9" x="3" y="3" rx="1"/><rect width="7" height="5" x="14" y="3" rx="1"/><rect width="7" height="9" x="14" y="12" rx="1"/><rect width="7" height="5" x="3" y="16" rx="1"/></svg>
<svg class="ic" style="left:120.8px;top:270.2px" width="32.3" height="32.3" viewBox="0 0 24 24" fill="none" stroke="#3f3f46" stroke-width="2" stroke-linecap="round" stroke-linejoin="round"><path d="M21 12h-8"/><path d="M21 6H8"/><path d="M21 18h-8"/><path d="M3 6v4c0 1.1.9 2 2 2h3"/><path d="M3 10v6c0 1.1.9 2 2 2h3"/></svg>
<svg class="ic" style="left:120.8px;top:341.9px" width="32.3" height="32.3" viewBox="0 0 24 24" fill="none" stroke="#3f3f46" stroke-width="2" stroke-linecap="round" stroke-linejoin="round"><path d="M15 14c.2-1 .7-1.700 1.500-2.500 1-.9 1.500-2.200 1.500-3.500A6 6 0 0 0 6 8c0 1 .2 2.200 1.500 3.500.7.700 1.300 1.500 1.500 2.500"/><path d="M9 18h6"/><path d="M10 22h4"/></svg>
<svg class="ic" style="left:120.8px;top:414.1px" width="32.3" height="32.3" viewBox="0 0 24 24" fill="none" stroke="#3f3f46" stroke-width="2" stroke-linecap="round" stroke-linejoin="round"><path d="M16 21v-2a4 4 0 0 0-4-4H6a4 4 0 0 0-4 4v2"/><circle cx="9" cy="7" r="4"/><path d="M22 21v-2a4 4 0 0 0-3-3.870"/><path d="M16 3.130a4 4 0 0 1 0 7.750"/></svg>
<svg class="ic" style="left:120.8px;top:485.7px" width="32.3" height="32.3" viewBox="0 0 24 24" fill="none" stroke="#3f3f46" stroke-width="2" stroke-linecap="round" stroke-linejoin="round"><path d="M15 2H6a2 2 0 0 0-2 2v16a2 2 0 0 0 2 2h12a2 2 0 0 0 2-2V7Z"/><path d="M14 2v4a2 2 0 0 0 2 2h4"/><path d="M10 12a1 1 0 0 0-1 1v1a1 1 0 0 1-1 1 1 1 0 0 1 1 1v1a1 1 0 0 0 1 1"/><path d="M14 18a1 1 0 0 0 1-1v-1a1 1 0 0 1 1-1 1 1 0 0 1-1-1v-1a1 1 0 0 0-1-1"/></svg>
<svg class="ic" style="left:120.8px;top:558.1px" width="32.3" height="32.3" viewBox="0 0 24 24" fill="none" stroke="#3f3f46" stroke-width="2" stroke-linecap="round" stroke-linejoin="round"><polyline points="4 17 10 11 4 5"/><line x1="12" x2="20" y1="19" y2="19"/></svg>
<svg class="ic" style="left:120.8px;top:629.6px" width="32.3" height="32.3" viewBox="0 0 24 24" fill="none" stroke="#3f3f46" stroke-width="2" stroke-linecap="round" stroke-linejoin="round"><ellipse cx="12" cy="5" rx="9" ry="3"/><path d="M3 5V19A9 3 0 0 0 21 19V5"/><path d="M3 12A9 3 0 0 0 21 12"/></svg>
<svg class="ic" style="left:120.8px;top:1263.8px" width="32.3" height="32.3" viewBox="0 0 24 24" fill="none" stroke="#3f3f46" stroke-width="2" stroke-linecap="round" stroke-linejoin="round"><path d="M12.220 2h-.440a2 2 0 0 0-2 2v.180a2 2 0 0 1-1 1.730l-.430.250a2 2 0 0 1-2 0l-.150-.080a2 2 0 0 0-2.730.730l-.220.380a2 2 0 0 0 .730 2.730l.150.100a2 2 0 0 1 1 1.720v.510a2 2 0 0 1-1 1.740l-.150.090a2 2 0 0 0-.730 2.730l.220.380a2 2 0 0 0 2.730.730l.150-.080a2 2 0 0 1 2 0l.430.250a2 2 0 0 1 1 1.730V20a2 2 0 0 0 2 2h.440a2 2 0 0 0 2-2v-.180a2 2 0 0 1 1-1.730l.430-.250a2 2 0 0 1 2 0l.150.080a2 2 0 0 0 2.730-.730l.220-.390a2 2 0 0 0-.730-2.730l-.150-.080a2 2 0 0 1-1-1.740v-.500a2 2 0 0 1 1-1.740l.150-.090a2 2 0 0 0 .730-2.730l-.220-.380a2 2 0 0 0-2.730-.730l-.150.080a2 2 0 0 1-2 0l-.430-.250a2 2 0 0 1-1-1.730V4a2 2 0 0 0-2-2z"/><circle cx="12" cy="12" r="3"/></svg>
<svg class="ic" style="left:120.8px;top:1335.8px" width="32.3" height="32.3" viewBox="0 0 24 24" fill="none" stroke="#3f3f46" stroke-width="2" stroke-linecap="round" stroke-linejoin="round"><circle cx="12" cy="12" r="10"/><path d="m4.930 4.930 4.240 4.240"/><path d="m14.830 9.170 4.240-4.240"/><path d="m14.830 14.830 4.240 4.240"/><path d="m9.170 14.830-4.240 4.240"/><circle cx="12" cy="12" r="4"/></svg>
<svg class="ic" style="left:296.5px;top:118.5px" width="40.9" height="40.9" viewBox="0 0 24 24" fill="none" stroke="#3f3f46" stroke-width="1.7" stroke-linecap="round" stroke-linejoin="round"><rect width="18" height="18" x="3" y="3" rx="2"/><path d="M9 3v18"/></svg>
<svg class="ic" style="left:731.5px;top:123.2px" width="31.5" height="31.5" viewBox="0 0 24 24" fill="none" stroke="#0f172a" stroke-width="2" stroke-linecap="round" stroke-linejoin="round"><path d="m6 9 6 6 6-6"/></svg>
<svg class="ic" style="left:1017.3px;top:123.2px" width="31.5" height="31.5" viewBox="0 0 24 24" fill="none" stroke="#0f172a" stroke-width="2" stroke-linecap="round" stroke-linejoin="round"><path d="m6 9 6 6 6-6"/></svg>
<svg class="ic" style="left:368.7px;top:884.1px" width="27.6" height="27.6" viewBox="0 0 24 24" fill="none" stroke="#64748b" stroke-width="2" stroke-linecap="round" stroke-linejoin="round"><path d="M7 7h10v10"/><path d="M7 17 17 7"/></svg>
<svg class="ic" style="left:568.7px;top:956.5px" width="27.6" height="27.6" viewBox="0 0 24 24" fill="none" stroke="#64748b" stroke-width="2" stroke-linecap="round" stroke-linejoin="round"><path d="M7 7h10v10"/><path d="M7 17 17 7"/></svg>
<svg class="ic" style="left:1130.2px;top:614.1px" width="24.0" height="24.0" viewBox="0 0 24 24" fill="none" stroke="#64748b" stroke-width="1.75" stroke-linecap="round" stroke-linejoin="round"><circle cx="12" cy="12" r="10"/><path d="M12 16v-4"/><path d="M12 8h.010"/></svg>
<svg class="ic" style="left:105.0px;top:1416.0px;border-radius:13px" width="64.0" height="64.0" viewBox="0 0 48 48"><defs><radialGradient id="fg99" cx="52%" cy="42%" r="62%"><stop offset="0" stop-color="#efbfac"/><stop offset="0.6" stop-color="#dea692"/><stop offset="1" stop-color="#a8735f"/></radialGradient><filter id="fb99" x="-20%" y="-20%" width="140%" height="140%"><feGaussianBlur stdDeviation="0.5"/></filter></defs><rect width="48" height="48" fill="#26292c"/><g filter="url(#fb99)"><path d="M0 48 L8 46.500 C13 44.500 16 42.800 18.500 41 L35 39.200 C38 41 42 43.500 46.500 45.800 L48 48 Z" fill="#0d0d0e"/><path d="M19 35 L34 35 L35.200 39.500 C33 43 31 46 30.500 48 L23 48 C22 45 20 42.500 18.500 41 Z" fill="#b5836e"/><path d="M19.500 35.500 C22 40.500 28.500 40.500 31 35.500 L32 38 C28.500 42.500 22 42.500 19 38.500 Z" fill="#96655a" opacity="0.55"/><path d="M12.200 24.500 C11.300 10 17 1.200 25.500 1.200 C34 1.200 39.200 9 38 24.500 Z" fill="#30221c"/><ellipse cx="13.800" cy="24.300" rx="1.600" ry="3.400" fill="#c58b76"/><ellipse cx="36.500" cy="24.300" rx="1.600" ry="3.400" fill="#c58b76"/><path d="M15.100 20 C15 12 19 9.400 25.200 9.400 C31.500 9.400 35.400 12 35.300 20 C35.300 27 33.800 32 31 35.500 C29 38 27 38.900 25.200 38.900 C23.400 38.900 21.400 38 19.400 35.500 C16.600 32 15.100 27 15.100 20 Z" fill="url(#fg99)"/><path d="M12.200 23.500 C11.500 10 17 1.200 25.500 1.200 C34 1.200 39 9 38 23.500 C37.600 19 36.600 15 35 12.500 C33 10.600 30 9.800 26 9.900 C21.500 10 18.500 11.500 16.500 13.400 C14.600 15.500 13 19 12.200 23.500 Z" fill="#30221c"/><path d="M17 8 C20 4.500 27 3.500 32 6.500" stroke="#46332a" stroke-width="2.200" fill="none"/><path d="M16.800 18.300 C18.400 17.300 20.800 17.300 22.400 18.200 M28 18.200 C29.600 17.300 32 17.300 33.600 18.300" stroke="#5b3d32" stroke-width="1.100" fill="none"/><ellipse cx="19.500" cy="20" rx="2.100" ry="0.850" fill="#4a322b"/><ellipse cx="30.500" cy="20" rx="2.100" ry="0.850" fill="#4a322b"/><path d="M22.600 26 C23.800 27 26.600 27 27.800 26" stroke="#a56b59" stroke-width="1.100" fill="none"/><path d="M20.300 28.800 C22.800 29.500 27.600 29.500 30.100 28.800 C28.600 32 21.800 32 20.300 28.800 Z" fill="#d9cdbb"/><path d="M19.800 28.500 C22.800 29.300 27.600 29.300 30.600 28.500" stroke="#8f5648" stroke-width="0.900" fill="none"/><path d="M20.500 29.600 C22 32.800 28.400 32.800 29.900 29.600" stroke="#a8685a" stroke-width="0.800" fill="none"/></g></svg>
<span class="t" style="left:370.0px;top:128.0px;font-size:22.97px;-webkit-text-stroke:0.3px #dc2626;color:#dc2626;letter-spacing:-0.654px;">PROD-EU</span>
<span class="t" style="left:531.8px;top:126.0px;font-size:26.78px;-webkit-text-stroke:0.3px #0f172a;color:#0f172a;letter-spacing:0.169px;">Langfuse Demo</span>
<span class="t" style="left:832.1px;top:126.0px;font-size:26.78px;-webkit-text-stroke:0.3px #0f172a;color:#0f172a;letter-spacing:0.737px;">langfuse-docs</span>
<span class="t" style="left:298.6px;top:183.0px;font-size:46.56px;font-weight:700;color:#3f3f46;letter-spacing:-1.157px;">Project Settings</span>
<span class="t" style="left:274.0px;top:313.0px;font-size:26.78px;font-weight:700;color:#64748b;letter-spacing:-0.348px;">General</span>
<span class="t" style="left:274.0px;top:384.0px;font-size:26.78px;font-weight:700;color:#64748b;letter-spacing:-0.807px;">API Keys</span>
<span class="t" style="left:274.0px;top:456.0px;font-size:26.78px;font-weight:700;color:#64748b;letter-spacing:-0.141px;">Models</span>
<span class="t" style="left:274.0px;top:527.0px;font-size:26.78px;font-weight:700;color:#64748b;letter-spacing:-0.274px;">Scores / Evaluation</span>
<span class="t" style="left:274.0px;top:599.0px;font-size:26.78px;font-weight:700;color:#64748b;letter-spacing:0.078px;">Members</span>
<span class="t" style="left:274.0px;top:671.0px;font-size:26.78px;font-weight:700;color:#64748b;letter-spacing:0.021px;">Integrations</span>
<span class="t" style="left:274.0px;top:742.0px;font-size:26.78px;font-weight:700;color:#64748b;letter-spacing:-0.426px;">Exports</span>
<span class="t" style="left:274.0px;top:814.0px;font-size:26.78px;font-weight:700;color:#0f172a;letter-spacing:-0.583px;">Audit Logs</span>
<span class="t" style="left:274.0px;top:885.0px;font-size:26.78px;font-weight:700;color:#64748b;letter-spacing:-0.830px;">Billing</span>
<span class="t" style="left:274.0px;top:957.0px;font-size:26.78px;font-weight:700;color:#64748b;letter-spacing:-0.000px;">Organization Settings</span>
<span class="t" style="left:754.0px;top:340.0px;font-size:38.21px;font-weight:700;color:#3f3f46;letter-spacing:-1.830px;">Audit Logs</span>
<span class="t" style="left:754.0px;top:409.0px;font-size:26.78px;-webkit-text-stroke:0.3px #64748b;color:#64748b;letter-spacing:0.428px;">Track who changed what in your project and when. Monitor settings, configurations, and data changes over time. Reach out to the Langfuse team if</span>
<span class="t" style="left:754.0px;top:448.0px;font-size:26.78px;-webkit-text-stroke:0.3px #64748b;color:#64748b;letter-spacing:0.450px;">you require more detailed/filtered audit logs.</span>
<span class="t" style="left:772.0px;top:613.0px;font-size:26.78px;color:#64748b;letter-spacing:0.505px;-webkit-text-stroke:0.9px #64748b;">Time</span>
<span class="t" style="left:1064.0px;top:613.0px;font-size:26.78px;color:#64748b;letter-spacing:0.161px;-webkit-text-stroke:0.9px #64748b;">User</span>
<span class="t" style="left:1316.0px;top:613.0px;font-size:26.78px;color:#64748b;letter-spacing:0.456px;-webkit-text-stroke:0.9px #64748b;">Resource Type</span>
<span class="t" style="left:1615.4px;top:613.0px;font-size:26.78px;color:#64748b;letter-spacing:0.123px;-webkit-text-stroke:0.9px #64748b;">Resource ID</span>
<span class="t" style="left:1949.5px;top:613.0px;font-size:26.78px;color:#64748b;letter-spacing:0.922px;-webkit-text-stroke:0.9px #64748b;">Action</span>
<span class="t" style="left:2249.6px;top:613.0px;font-size:26.78px;color:#64748b;letter-spacing:0.428px;-webkit-text-stroke:0.9px #64748b;">Before</span>
<span class="t" style="left:772.0px;top:688.0px;font-size:22.97px;-webkit-text-stroke:0.3px #3f3f46;color:#3f3f46;letter-spacing:0.529px;">1/22/2025, 8:33:46 PM</span>
<span class="t" style="left:1128.7px;top:686.0px;font-size:26.78px;-webkit-text-stroke:0.3px #3f3f46;color:#3f3f46;letter-spacing:0.072px;">Marc Klingen</span>
<span class="t" style="left:1315.5px;top:688.0px;font-size:22.97px;-webkit-text-stroke:0.3px #3f3f46;color:#3f3f46;letter-spacing:0.457px;">comment</span>
<span class="t" style="left:1615.4px;top:688.0px;font-size:22.97px;-webkit-text-stroke:0.3px #3f3f46;color:#3f3f46;letter-spacing:0.798px;">cm68ay7s800fw126j9uri6lpc</span>
<span class="t" style="left:1949.5px;top:688.0px;font-size:22.97px;-webkit-text-stroke:0.3px #3f3f46;color:#3f3f46;letter-spacing:0.531px;">create</span>
<span class="t" style="left:772.0px;top:754.0px;font-size:22.97px;-webkit-text-stroke:0.3px #3f3f46;color:#3f3f46;letter-spacing:0.529px;">1/22/2025, 8:33:24 PM</span>
<span class="t" style="left:1128.7px;top:752.0px;font-size:26.78px;-webkit-text-stroke:0.3px #3f3f46;color:#3f3f46;letter-spacing:0.072px;">Marc Klingen</span>
<span class="t" style="left:1315.5px;top:754.0px;font-size:22.97px;-webkit-text-stroke:0.3px #3f3f46;color:#3f3f46;letter-spacing:0.457px;">score</span>
<span class="t" style="left:1615.4px;top:738.0px;font-size:22.97px;-webkit-text-stroke:0.3px #3f3f46;color:#3f3f46;letter-spacing:1.357px;">b26ab4c6-d2e3-479d-ad4d-</span>
<span class="t" style="left:1615.4px;top:771.0px;font-size:22.97px;-webkit-text-stroke:0.3px #3f3f46;color:#3f3f46;letter-spacing:1.026px;">af980072ac9f</span>
<span class="t" style="left:1949.5px;top:754.0px;font-size:22.97px;-webkit-text-stroke:0.3px #3f3f46;color:#3f3f46;letter-spacing:0.547px;">update</span>
<span class="t" style="left:772.0px;top:820.0px;font-size:22.97px;-webkit-text-stroke:0.3px #3f3f46;color:#3f3f46;letter-spacing:0.529px;">1/22/2025, 8:33:12 PM</span>
<span class="t" style="left:1128.7px;top:818.0px;font-size:26.78px;-webkit-text-stroke:0.3px #3f3f46;color:#3f3f46;letter-spacing:0.072px;">Marc Klingen</span>
<span class="t" style="left:1315.5px;top:820.0px;font-size:22.97px;-webkit-text-stroke:0.3px #3f3f46;color:#3f3f46;letter-spacing:0.457px;">score</span>
<span class="t" style="left:1615.4px;top:804.0px;font-size:22.97px;-webkit-text-stroke:0.3px #3f3f46;color:#3f3f46;letter-spacing:1.357px;">b26ab4c6-d2e3-479d-ad4d-</span>
<span class="t" style="left:1615.4px;top:837.0px;font-size:22.97px;-webkit-text-stroke:0.3px #3f3f46;color:#3f3f46;letter-spacing:1.026px;">af980072ac9f</span>
<span class="t" style="left:1949.5px;top:820.0px;font-size:22.97px;-webkit-text-stroke:0.3px #3f3f46;color:#3f3f46;letter-spacing:0.531px;">create</span>
<span class="t" style="left:772.0px;top:886.0px;font-size:22.97px;-webkit-text-stroke:0.3px #3f3f46;color:#3f3f46;letter-spacing:0.529px;">1/22/2025, 8:33:09 PM</span>
<span class="t" style="left:1128.7px;top:884.0px;font-size:26.78px;-webkit-text-stroke:0.3px #3f3f46;color:#3f3f46;letter-spacing:0.072px;">Marc Klingen</span>
<span class="t" style="left:1315.5px;top:886.0px;font-size:22.97px;-webkit-text-stroke:0.3px #3f3f46;color:#3f3f46;letter-spacing:0.449px;">annotationQueueItem</span>
<span class="t" style="left:1615.4px;top:886.0px;font-size:22.97px;-webkit-text-stroke:0.3px #3f3f46;color:#3f3f46;letter-spacing:0.924px;">cm68awidb00fl8rjzzdfmu0xo</span>
<span class="t" style="left:1949.5px;top:886.0px;font-size:22.97px;-webkit-text-stroke:0.3px #3f3f46;color:#3f3f46;letter-spacing:0.685px;">complete</span>
<span class="t" style="left:772.0px;top:952.0px;font-size:22.97px;-webkit-text-stroke:0.3px #3f3f46;color:#3f3f46;letter-spacing:0.529px;">1/22/2025, 8:33:08 PM</span>
<span class="t" style="left:1128.7px;top:950.0px;font-size:26.78px;-webkit-text-stroke:0.3px #3f3f46;color:#3f3f46;letter-spacing:0.072px;">Marc Klingen</span>
<span class="t" style="left:1315.5px;top:952.0px;font-size:22.97px;-webkit-text-stroke:0.3px #3f3f46;color:#3f3f46;letter-spacing:0.457px;">score</span>
<span class="t" style="left:1615.4px;top:936.0px;font-size:22.97px;-webkit-text-stroke:0.3px #3f3f46;color:#3f3f46;letter-spacing:0.970px;">1f1e2435-7bd7-480e-a2a0-</span>
<span class="t" style="left:1615.4px;top:969.0px;font-size:22.97px;-webkit-text-stroke:0.3px #3f3f46;color:#3f3f46;letter-spacing:0.545px;">ab76bec21b69</span>
<span class="t" style="left:1949.5px;top:952.0px;font-size:22.97px;-webkit-text-stroke:0.3px #3f3f46;color:#3f3f46;letter-spacing:0.531px;">create</span>
<span class="t" style="left:772.0px;top:1018.0px;font-size:22.97px;-webkit-text-stroke:0.3px #3f3f46;color:#3f3f46;letter-spacing:0.529px;">1/22/2025, 8:33:06 PM</span>
<span class="t" style="left:1128.7px;top:1016.0px;font-size:26.78px;-webkit-text-stroke:0.3px #3f3f46;color:#3f3f46;letter-spacing:0.072px;">Marc Klingen</span>
<span class="t" style="left:1315.5px;top:1018.0px;font-size:22.97px;-webkit-text-stroke:0.3px #3f3f46;color:#3f3f46;letter-spacing:0.449px;">annotationQueueItem</span>
<span class="t" style="left:1615.4px;top:1018.0px;font-size:22.97px;-webkit-text-stroke:0.3px #3f3f46;color:#3f3f46;letter-spacing:0.939px;">cm68awidb00fk8rjz0wxixrdc</span>
<span class="t" style="left:1949.5px;top:1018.0px;font-size:22.97px;-webkit-text-stroke:0.3px #3f3f46;color:#3f3f46;letter-spacing:0.685px;">complete</span>
<span class="t" style="left:772.0px;top:1084.0px;font-size:22.97px;-webkit-text-stroke:0.3px #3f3f46;color:#3f3f46;letter-spacing:0.529px;">1/22/2025, 8:33:06 PM</span>
<span class="t" style="left:1128.7px;top:1082.0px;font-size:26.78px;-webkit-text-stroke:0.3px #3f3f46;color:#3f3f46;letter-spacing:0.072px;">Marc Klingen</span>
<span class="t" style="left:1315.5px;top:1084.0px;font-size:22.97px;-webkit-text-stroke:0.3px #3f3f46;color:#3f3f46;letter-spacing:0.457px;">score</span>
<span class="t" style="left:1615.4px;top:1068.0px;font-size:22.97px;-webkit-text-stroke:0.3px #3f3f46;color:#3f3f46;letter-spacing:1.313px;">83cd1563-bb95-4012-8356-</span>
<span class="t" style="left:1615.4px;top:1101.0px;font-size:22.97px;-webkit-text-stroke:0.3px #3f3f46;color:#3f3f46;letter-spacing:1.064px;">400b52b64168</span>
<span class="t" style="left:1949.5px;top:1084.0px;font-size:22.97px;-webkit-text-stroke:0.3px #3f3f46;color:#3f3f46;letter-spacing:0.531px;">create</span>
<span class="t" style="left:772.0px;top:1150.0px;font-size:22.97px;-webkit-text-stroke:0.3px #3f3f46;color:#3f3f46;letter-spacing:0.529px;">1/22/2025, 8:33:04 PM</span>
<span class="t" style="left:1128.7px;top:1148.0px;font-size:26.78px;-webkit-text-stroke:0.3px #3f3f46;color:#3f3f46;letter-spacing:0.072px;">Marc Klingen</span>
<span class="t" style="left:1315.5px;top:1150.0px;font-size:22.97px;-webkit-text-stroke:0.3px #3f3f46;color:#3f3f46;letter-spacing:0.449px;">annotationQueueItem</span>
<span class="t" style="left:1615.4px;top:1150.0px;font-size:22.97px;-webkit-text-stroke:0.3px #3f3f46;color:#3f3f46;letter-spacing:0.869px;">cm68awidb00fj8rjzbanzqh6v</span>
<span class="t" style="left:1949.5px;top:1150.0px;font-size:22.97px;-webkit-text-stroke:0.3px #3f3f46;color:#3f3f46;letter-spacing:0.685px;">complete</span>
<span class="t" style="left:772.0px;top:1216.0px;font-size:22.97px;-webkit-text-stroke:0.3px #3f3f46;color:#3f3f46;letter-spacing:0.529px;">1/22/2025, 8:33:03 PM</span>
<span class="t" style="left:1128.7px;top:1214.0px;font-size:26.78px;-webkit-text-stroke:0.3px #3f3f46;color:#3f3f46;letter-spacing:0.072px;">Marc Klingen</span>
<span class="t" style="left:1315.5px;top:1216.0px;font-size:22.97px;-webkit-text-stroke:0.3px #3f3f46;color:#3f3f46;letter-spacing:0.457px;">score</span>
<span class="t" style="left:1615.4px;top:1200.0px;font-size:22.97px;-webkit-text-stroke:0.3px #3f3f46;color:#3f3f46;letter-spacing:1.405px;">12019d64-5d49-48b8-8f32-</span>
<span class="t" style="left:1615.4px;top:1233.0px;font-size:22.97px;-webkit-text-stroke:0.3px #3f3f46;color:#3f3f46;letter-spacing:0.791px;">5e0b831a8bb9</span>
<span class="t" style="left:1949.5px;top:1216.0px;font-size:22.97px;-webkit-text-stroke:0.3px #3f3f46;color:#3f3f46;letter-spacing:0.531px;">create</span>
<span class="t" style="left:772.0px;top:1282.0px;font-size:22.97px;-webkit-text-stroke:0.3px #3f3f46;color:#3f3f46;letter-spacing:0.529px;">1/22/2025, 8:32:26 PM</span>
<span class="t" style="left:1128.7px;top:1280.0px;font-size:26.78px;-webkit-text-stroke:0.3px #3f3f46;color:#3f3f46;letter-spacing:0.072px;">Marc Klingen</span>
<span class="t" style="left:1315.5px;top:1282.0px;font-size:22.97px;-webkit-text-stroke:0.3px #3f3f46;color:#3f3f46;letter-spacing:0.449px;">annotationQueueItem</span>
<span class="t" style="left:1615.4px;top:1282.0px;font-size:22.97px;-webkit-text-stroke:0.3px #3f3f46;color:#3f3f46;letter-spacing:0.794px;">cm68awidc00gv8rjzfbnve5az</span>
<span class="t" style="left:1949.5px;top:1282.0px;font-size:22.97px;-webkit-text-stroke:0.3px #3f3f46;color:#3f3f46;letter-spacing:0.531px;">create</span>
<span class="t" style="left:772.0px;top:1348.0px;font-size:22.97px;-webkit-text-stroke:0.3px #3f3f46;color:#3f3f46;letter-spacing:0.529px;">1/22/2025, 8:32:26 PM</span>
<span class="t" style="left:1128.7px;top:1346.0px;font-size:26.78px;-webkit-text-stroke:0.3px #3f3f46;color:#3f3f46;letter-spacing:0.072px;">Marc Klingen</span>
<span class="t" style="left:1315.5px;top:1348.0px;font-size:22.97px;-webkit-text-stroke:0.3px #3f3f46;color:#3f3f46;letter-spacing:0.449px;">annotationQueueItem</span>
<span class="t" style="left:1615.4px;top:1348.0px;font-size:22.97px;-webkit-text-stroke:0.3px #3f3f46;color:#3f3f46;letter-spacing:0.847px;">cm68awidc00gu8rjz0lbujwpe</span>
<span class="t" style="left:1949.5px;top:1348.0px;font-size:22.97px;-webkit-text-stroke:0.3px #3f3f46;color:#3f3f46;letter-spacing:0.531px;">create</span>
<span class="t" style="left:772.0px;top:1414.0px;font-size:22.97px;-webkit-text-stroke:0.3px #3f3f46;color:#3f3f46;letter-spacing:0.529px;">1/22/2025, 8:32:26 PM</span>
<span class="t" style="left:1128.7px;top:1412.0px;font-size:26.78px;-webkit-text-stroke:0.3px #3f3f46;color:#3f3f46;letter-spacing:0.072px;">Marc Klingen</span>
<span class="t" style="left:1315.5px;top:1414.0px;font-size:22.97px;-webkit-text-stroke:0.3px #3f3f46;color:#3f3f46;letter-spacing:0.449px;">annotationQueueItem</span>
<span class="t" style="left:1615.4px;top:1414.0px;font-size:22.97px;-webkit-text-stroke:0.3px #3f3f46;color:#3f3f46;letter-spacing:1.029px;">cm68awidc00gt8rjzw2fkm8bo</span>
<span class="t" style="left:1949.5px;top:1414.0px;font-size:22.97px;-webkit-text-stroke:0.3px #3f3f46;color:#3f3f46;letter-spacing:0.531px;">create</span>
<span class="t" style="left:772.0px;top:1480.0px;font-size:22.97px;-webkit-text-stroke:0.3px #3f3f46;color:#3f3f46;letter-spacing:0.529px;">1/22/2025, 8:32:26 PM</span>
<span class="t" style="left:1128.7px;top:1478.0px;font-size:26.78px;-webkit-text-stroke:0.3px #3f3f46;color:#3f3f46;letter-spacing:0.072px;">Marc Klingen</span>
<span class="t" style="left:1315.5px;top:1480.0px;font-size:22.97px;-webkit-text-stroke:0.3px #3f3f46;color:#3f3f46;letter-spacing:0.449px;">annotationQueueItem</span>
<span class="t" style="left:1615.4px;top:1480.0px;font-size:22.97px;-webkit-text-stroke:0.3px #3f3f46;color:#3f3f46;letter-spacing:0.868px;">cm68awidc00gs8rjzgvxl5sgw</span>
<span class="t" style="left:1949.5px;top:1480.0px;font-size:22.97px;-webkit-text-stroke:0.3px #3f3f46;color:#3f3f46;letter-spacing:0.531px;">create</span>
</div></div>
</body></html>
